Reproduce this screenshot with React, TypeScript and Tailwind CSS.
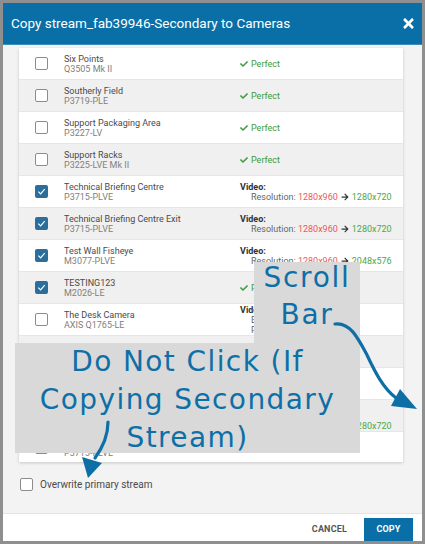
import { FaCheck, FaArrowRight, FaTimes } from 'react-icons/fa'

type Cam = {
    name: string
    model: string
    checked: boolean
    status: 'perfect' | 'video'
    lines?: string[]
    res?: [string, string]
}

const cams: Cam[] = [
    { name: 'Six Points', model: 'Q3505 Mk II', checked: false, status: 'perfect' },
    { name: 'Southerly Field', model: 'P3719-PLE', checked: false, status: 'perfect' },
    { name: 'Support Packaging Area', model: 'P3227-LV', checked: false, status: 'perfect' },
    { name: 'Support Racks', model: 'P3225-LVE Mk II', checked: false, status: 'perfect' },
    { name: 'Technical Briefing Centre', model: 'P3715-PLVE', checked: true, status: 'video', res: ['1280x960', '1280x720'] },
    { name: 'Technical Briefing Centre Exit', model: 'P3715-PLVE', checked: true, status: 'video', res: ['1280x960', '1280x720'] },
    { name: 'Test Wall Fisheye', model: 'M3077-PLVE', checked: true, status: 'video', res: ['1280x960', '2048x576'] },
    { name: 'TESTING123', model: 'M2026-LE', checked: true, status: 'perfect' },
    { name: 'The Desk Camera', model: 'AXIS Q1765-LE', checked: false, status: 'video', lines: ['Exposure: Auto', 'Power line: 60 Hz'] },
    { name: 'Warehouse Loading Dock', model: 'P1435-LE', checked: false, status: 'perfect' },
    { name: 'West Entrance', model: 'Q6155-E', checked: false, status: 'perfect' },
    { name: 'West Parking Lot', model: 'P3715-PLVE', checked: false, status: 'video', lines: ['Frame Rate: 30'], res: ['1280x960', '1280x720'] },
    { name: 'Yard Overview', model: 'P3715-PLVE', checked: false, status: 'perfect' },
]

const Box = ({ checked }: { checked: boolean }) =>
    checked ? (
        <div className="w-[13px] h-[13px] rounded-[2px] bg-[#2c6e9b] flex items-center justify-center">
            <svg width="9" height="9" viewBox="0 0 10 10" fill="none">
                <path d="M1.5 5.2 L4 7.6 L8.6 2.4" stroke="white" strokeWidth="1.3" />
            </svg>
        </div>
    ) : (
        <div className="w-[13px] h-[13px] rounded-[2px] bg-white border-[1.5px] border-[#8c8c8c]" />
    )

export default function App() {
    return (
        <div className="relative w-[425px] h-[544px] overflow-hidden font-['Roboto',sans-serif]">
            <div className="w-full h-full border-[3px] border-[#8f8f8f] bg-[#f3f3f3] flex flex-col">
                <header className="h-[42px] shrink-0 bg-[#0a6fa6] flex items-center justify-between pl-[8px] pr-[6px] border-b border-[#3a8cba]">
                    <h1 className="text-[13.5px] text-white leading-none">Copy stream_fab39946-Secondary to Cameras</h1>
                    <FaTimes className="text-white" size={15} />
                </header>

                <main className="flex-1 flex flex-col pl-[16px] pr-[19px] pt-[3px]">
                    <div className="h-[414px] bg-white overflow-hidden shadow-[0_1px_3px_rgba(0,0,0,0.18)]">
                        {cams.map((c, i) => (
                            <div
                                key={c.name}
                                className={`h-[32px] flex items-center border-b border-[#e6e6e6] text-[9px] leading-[10px] ${i % 2 === 1 ? 'bg-[#f0f0f0]' : 'bg-white'}`}
                            >
                                <div className="w-[45px] pl-[16px] shrink-0">
                                    <Box checked={c.checked} />
                                </div>
                                <div className="w-[176px] shrink-0">
                                    <div className="text-[#4a4a4a]">{c.name}</div>
                                    <div className="text-[#808080]">{c.model}</div>
                                </div>
                                <div className="flex-1">
                                    {c.status === 'perfect' ? (
                                        <div className="flex items-center gap-[3px] text-[#3c9a3c]">
                                            <FaCheck size={8} />
                                            <span>Perfect</span>
                                        </div>
                                    ) : (
                                        <div>
                                            <div className="font-bold text-[#333]">Video:</div>
                                            {c.lines?.map((l) => (
                                                <div key={l} className="pl-[11px] text-[#666]">{l}</div>
                                            ))}
                                            {c.res && (
                                                <div className="pl-[11px] text-[#666] flex items-center">
                                                    <span>Resolution:&nbsp;</span>
                                                    <span className="text-[#f25555]">{c.res[0]}</span>
                                                    <FaArrowRight size={8} className="text-[#333] mx-[3px]" />
                                                    <span className="text-[#4aa84a]">{c.res[1]}</span>
                                                </div>
                                            )}
                                        </div>
                                    )}
                                </div>
                            </div>
                        ))}
                    </div>

                    <label className="flex items-center gap-[7px] mt-[15px] -ml-[16px] pl-[17px]">
                        <Box checked={false} />
                        <span className="text-[10px] text-[#4a4a4a]">Overwrite primary stream</span>
                    </label>
                </main>

                <footer className="h-[28px] shrink-0 bg-white border-t border-[#e4e4e4] flex items-end justify-end pr-[9px]">
                    <button className="h-[23px] px-[17px] text-[9px] font-bold text-[#555] tracking-[0.02em]">CANCEL</button>
                    <button className="h-[23px] w-[49px] bg-[#0a6fa6] text-white text-[9px] font-bold tracking-[0.02em]">COPY</button>
                </footer>
            </div>

            {/* annotations */}
            <div className="absolute left-[254px] top-[262px] w-[106px] h-[81px] bg-[#d9d9d9] text-center text-[#0e6fa7] text-[28px] leading-[37px] tracking-[0.06em] font-['DejaVu_Sans',sans-serif]">
                <div className="-mt-[3px]">Scroll</div>
                <div>Bar</div>
            </div>
            <div className="absolute left-[15px] top-[343px] w-[345px] h-[110px] bg-[#d9d9d9] text-center text-[#0e6fa7] text-[28px] leading-[38px] tracking-[0.05em] font-['DejaVu_Sans',sans-serif]">
                <div>Do Not Click (If</div>
                <div>Copying Secondary</div>
                <div>Stream)</div>
            </div>
            <svg className="absolute left-0 top-0 pointer-events-none" width="425" height="544" viewBox="0 0 425 544">
                <path d="M335 324 C350 322 358 338 367 355 C375 372 383 388 396 398" stroke="#0e6fa7" strokeWidth="3.2" fill="none" strokeLinecap="round" />
                <polygon points="391,406 417,409 400,389" fill="#0e6fa7" />
                <path d="M108 422 C108 436 103 447 95 458" stroke="#0e6fa7" strokeWidth="3.2" fill="none" strokeLinecap="round" />
                <polygon points="82,457 102,463 88,478" fill="#0e6fa7" />
            </svg>
        </div>
    )
}
